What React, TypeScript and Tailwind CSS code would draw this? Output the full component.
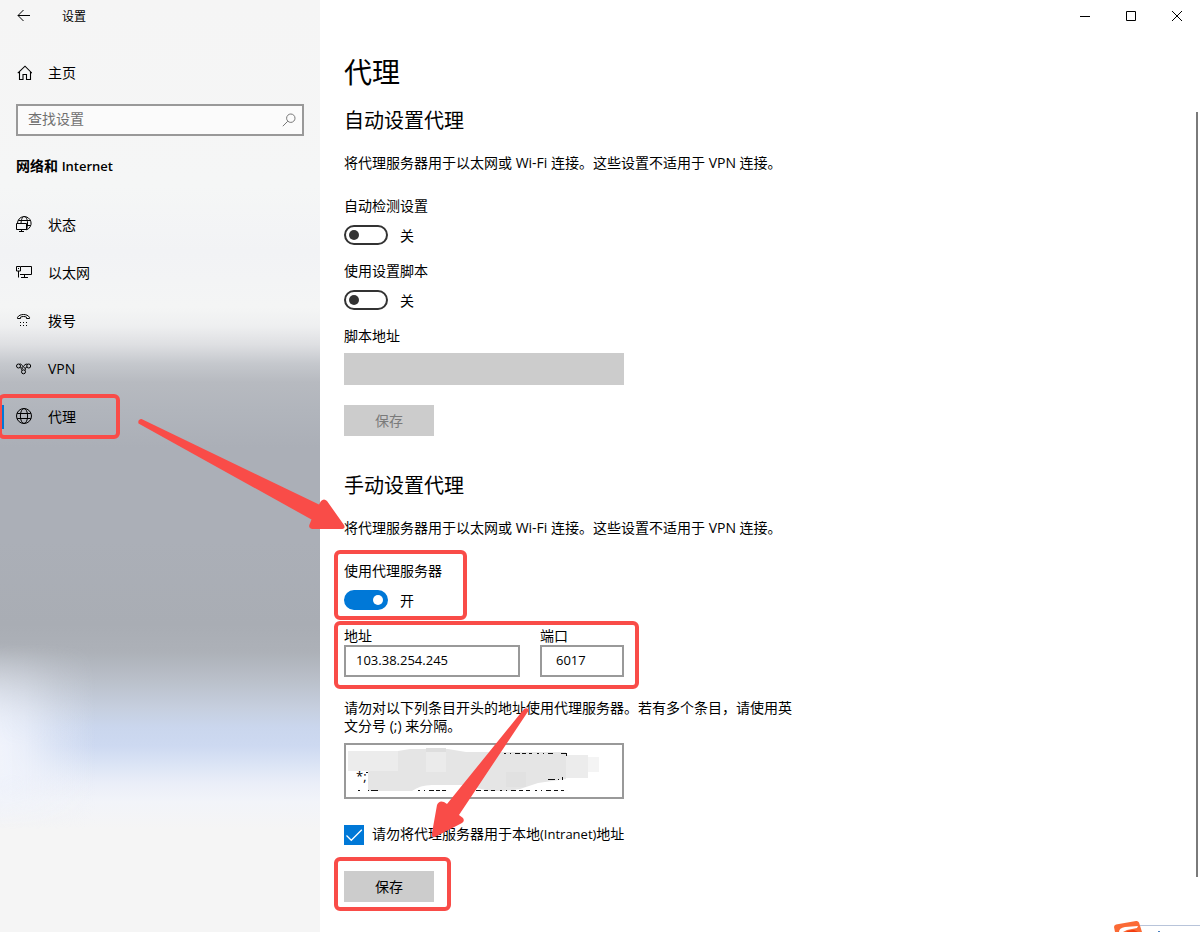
import { useState } from "react";
import type { ReactNode } from "react";

function Latin({ children }: { children: ReactNode }) {
  return <span className="text-[13px]">{children}</span>;
}

function StatusIcon() {
  return (
    <svg width="16" height="18" viewBox="0 0 16 18" fill="none" stroke="#000" strokeWidth="1" aria-hidden="true">
      <path d="M1.500 7.500a6.800 6.800 0 1 1 9 6.300M5 7.500C5.300 3 6.500.5 8.200.5s3.300 2.600 3.300 6.500c0 3-.4 5-1 6.500M2.500 4.500h12M10.500 9.500H14.500" />
      <path d="M.5 7.500h10v6H.5zM5.500 13.500v2M3 15.500h5" />
    </svg>
  );
}

function EthernetIcon() {
  return (
    <svg width="16" height="18" viewBox="0 0 16 18" fill="none" stroke="#000" strokeWidth="1" aria-hidden="true">
      <path d="M5 2.500h10.500v8H4M8.500 10.500v3M5 13.500h7" />
      <path d="M.5 2.500h4v4.500h-4zM2.500 7v6.500M2 4.500h1" />
    </svg>
  );
}

function DialIcon() {
  return (
    <svg width="16" height="18" viewBox="0 0 16 18" fill="none" stroke="#000" strokeWidth="1" aria-hidden="true">
      <path d="M1.500 6.500V5.400C2.600 3.400 5 2.500 7.500 2.500s4.900.9 6 2.900v1.100h-3V5.200C9.600 4.700 8.600 4.500 7.500 4.500s-2.100.2-3 .7v1.300z" />
      <path d="M4 10.500h1M7 10.500h1M10 10.500h1M4 13.500h1M7 13.500h1M10 13.500h1" />
    </svg>
  );
}

function VpnIcon() {
  return (
    <svg width="16" height="18" viewBox="0 0 16 18" fill="none" stroke="#000" strokeWidth="1" aria-hidden="true">
      <circle cx="2.500" cy="6" r="2" />
      <circle cx="12.700" cy="6" r="2" />
      <circle cx="7.500" cy="11.800" r="2" />
      <path d="M3.500 4.200C5 3.500 6 5 7 6.500s2.500 2 3.200 1L11.200 7M4 7.500c1.200 1.200 2 .2 3.200-1S9.500 3.500 11.700 4.300M6 10.500C5 9.300 5.600 8.300 7 8M9 10.500c.8-1 .6-2 0-2.500" />
    </svg>
  );
}

function GlobeIcon() {
  return (
    <svg width="16" height="18" viewBox="0 0 16 18" fill="none" stroke="#000" strokeWidth="1" aria-hidden="true">
      <circle cx="8" cy="8" r="7.500" />
      <ellipse cx="8" cy="8" rx="3.600" ry="7.500" />
      <path d="M1.200 5.500h13.600M1.200 10.500h13.600" />
    </svg>
  );
}

const navItems = [
  { label: "状态", icon: <StatusIcon /> },
  { label: "以太网", icon: <EthernetIcon /> },
  { label: "拨号", icon: <DialIcon /> },
  { label: "VPN", icon: <VpnIcon /> },
  { label: "代理", icon: <GlobeIcon />, current: true },
];

function Callout({ className }: { className: string }) {
  return <span aria-hidden="true" className={`pointer-events-none absolute rounded-md border-4 border-[#f94c48] ${className}`} />;
}

function Toggle({ label, initial = false }: { label: string; initial?: boolean }) {
  const [on, setOn] = useState(initial);
  return (
    <div>
      <div className="leading-5">{label}</div>
      <div className="mt-[9px] flex h-5 items-center gap-3">
        <button
          type="button"
          role="switch"
          aria-checked={on}
          aria-label={label}
          onClick={() => setOn(!on)}
          className={`flex h-5 w-11 items-center rounded-full border-2 px-[3px] ${on ? "justify-end border-[#0078d7] bg-[#0078d7]" : "border-[#333] bg-white"}`}
        >
          <span className={`size-[10px] rounded-full ${on ? "bg-white" : "bg-[#333]"}`} />
        </button>
        <span className="pt-px">{on ? "开" : "关"}</span>
      </div>
    </div>
  );
}

function Sidebar() {
  return (
    <aside className="relative w-80 shrink-0 bg-[linear-gradient(180deg,#f5f5f5_0%,#f5f6f6_20%,#f2f3f5_27%,#f4f5f5_33%,#eeeff0_35%,#dedfe2_37%,#c5c8cd_39%,#b7bac0_41%,#b1b5bc_44%,#abafb7_48%,#abafb7_58%,#a9adb4_67%,#adb1b8_70%,#bac0ca_73%,#c6cfdf_76%,#cad6ed_78%,#cdd9f1_80%,#dbe4f5_82%,#eaeef8_84%,#f2f4f9_86%,#f5f5f5_89%,#f5f5f5_100%)]">
      <div aria-hidden="true" className="absolute inset-y-0 left-0 w-24 bg-[linear-gradient(90deg,#f0f3fb_0%,#f0f3fbd0_25%,#f0f3fb60_60%,#f0f3fb00_100%)] [mask-image:linear-gradient(180deg,transparent_69%,#0006_73%,#000c_77%,#000_80%,#000_83%,transparent_89%)]" />
      <div className="relative">
        <div className="flex h-8 items-center">
          <button type="button" aria-label="返回" className="flex h-8 w-12 items-center justify-center">
            <svg width="14" height="14" viewBox="0 0 14 14" fill="none" stroke="#000" strokeWidth="1" aria-hidden="true">
              <path d="M1 6.500h12M6.500 1 1 6.500 6.500 12" />
            </svg>
          </button>
          <span className="pt-0.5 pl-[14px] text-xs">设置</span>
        </div>
        <a href="#home" className="mt-[17px] flex h-12 items-center gap-4 px-4">
          <svg width="16" height="16" viewBox="0 0 16 16" fill="none" stroke="#000" strokeWidth="1.100" aria-hidden="true">
            <path d="M1.800 8.200 9 1.200l7 7M3.500 7v7.500h3.500V9.500h3.500v5h4V7" />
          </svg>
          主页
        </a>
        <div className="mx-4 mt-[7px] flex h-8 items-center border-2 border-[#999] bg-white/60 pr-1.5 pl-2.5">
          <input aria-label="查找设置" placeholder="查找设置" className="min-w-0 flex-1 bg-transparent pb-0.5 outline-none placeholder:text-[#707070]" />
          <svg width="14" height="14" viewBox="0 0 14 14" fill="none" stroke="#777" strokeWidth="1" aria-hidden="true">
            <circle cx="8.800" cy="5.200" r="4.200" />
            <path d="M5.800 8.200.8 13.200" />
          </svg>
        </div>
        <h2 className="mt-5 px-4 leading-5 font-semibold">
          网络和 <Latin>Internet</Latin>
        </h2>
        <nav className="mt-[25px]">
          {navItems.map((item) => (
            <a
              key={item.label}
              href={`#${item.label}`}
              aria-current={item.current ? "page" : undefined}
              className="relative flex h-12 items-center gap-4 px-4"
            >
              {item.current && <span className="absolute top-3 left-0 h-6 w-1 bg-[#0078d7]" />}
              {item.icon}
              {item.label}
              {item.current && <Callout className="top-px -left-0.5 h-[45px] w-[122px]" />}
            </a>
          ))}
        </nav>
      </div>
    </aside>
  );
}

function WindowButtons() {
  return (
    <div className="flex h-8 justify-end">
      <button type="button" aria-label="最小化" className="flex w-[46px] items-center justify-center">
        <svg width="10" height="10" viewBox="0 0 10 10" stroke="#000" aria-hidden="true"><path d="M0 5.500h10" /></svg>
      </button>
      <button type="button" aria-label="最大化" className="flex w-[46px] items-center justify-center">
        <svg width="10" height="10" viewBox="0 0 10 10" fill="none" stroke="#000" aria-hidden="true"><path d="M.5.5h9v9h-9z" /></svg>
      </button>
      <button type="button" aria-label="关闭" className="flex w-[46px] items-center justify-center">
        <svg width="10" height="10" viewBox="0 0 10 10" stroke="#000" aria-hidden="true"><path d="m0 0 10 10M10 0 0 10" /></svg>
      </button>
    </div>
  );
}

function Description() {
  return (
    <p className="mt-[18px] leading-5">将代理服务器用于以太网或 Wi-Fi 连接。这些设置不适用于 VPN 连接。</p>
  );
}

function ExceptionList() {
  return (
    <div className="relative mt-2 h-14 w-[280px] max-w-full">
      <textarea
        aria-label="例外地址"
        defaultValue={"\n*;"}
        className="block size-full resize-none overflow-hidden border-2 border-[#999] bg-white px-2.5 py-1 text-[13px] leading-[18px] outline-none"
      />
      <svg className="pointer-events-none absolute top-0 left-0" width="280" height="56" viewBox="0 0 280 56" aria-hidden="true">
        <path fill="#e5e5e5" d="M24 8h30l12-2h38l18 3h100v27l-28 4-18 6-14 2H146l-26-6H88q-12 0-20 6H24z" />
        <path fill="#ececec" d="M4 8h50v20H4zM222 12h22v23h-22z" />
        <path fill="#f4f4f4" d="M244 14h11v15h-11z" />
        <path fill="#dedede" d="M82 5h20v4H82z" />
        <path fill="#e1e1e1" d="M162 29h20v15h-20z" />
        <path fill="#ebebeb" d="M82 9h20v20H82z" />
        <path
          stroke="#111"
          strokeDasharray="2 4 1 4 5 2 4 3 3 5"
          d="M160 10.500h50"
        />
        <path stroke="#111" d="M217 10.500h6M222.500 10v3M204 36.500h7M214 36.500h1M218.500 34v3M22 29.500h2" />
        <path
          stroke="#111"
          strokeDasharray="2 8 1 2 7 40 2 4 1 4 5 2 4 2 4 4"
          d="M14 47.500h92"
        />
        <path stroke="#111" strokeDasharray="5 3 4 3 4 5 2 4 1 4" d="M132 47.500h88" />
      </svg>
    </div>
  );
}

function Arrows() {
  return (
    <svg className="pointer-events-none absolute top-0 left-0" width="660" height="860" viewBox="0 0 660 860" fill="#f94c48" aria-hidden="true">
      <path d="M141.500 419 319 504.500 321 501q3-3 6 0L344 525q2 4-3 4H312q-4-1-2.500-4.500L311.500 519.500 138.500 423.500q-1-4 3-4.500Z" />
      <path d="M529 710 459 815l4 3q2 3-1 5L435 837q-4 1-3-4L437 805q2-5 7-3l3 2L524 709q3-2 5 1Z" />
    </svg>
  );
}

export default function App() {
  const [bypass, setBypass] = useState(true);
  return (
    <div className="relative flex min-h-screen overflow-hidden bg-white font-['Open_Sans','Noto_Sans_CJK_SC',sans-serif] text-sm text-black">
      <Sidebar />
      <main className="min-w-0 flex-1">
        <WindowButtons />
        <div className="px-6 pb-[30px]">
          <h1 className="mt-5 text-[28px] leading-10">代理</h1>

          <section className="mt-[15px]">
            <h2 className="text-xl leading-7">自动设置代理</h2>
            <Description />
            <div className="mt-[23px] flex flex-col gap-4">
              <Toggle label="自动检测设置" />
              <Toggle label="使用设置脚本" />
              <div>
                <label htmlFor="script-url" className="block leading-5">脚本地址</label>
                <input id="script-url" disabled className="mt-[7px] block h-8 w-[280px] max-w-full bg-[#ccc] px-3" />
              </div>
            </div>
            <button type="button" disabled className="mt-5 block h-[31px] w-[90px] bg-[#ccc] text-[#7a7a7a]">保存</button>
          </section>

          <section className="mt-9">
            <h2 className="text-xl leading-7">手动设置代理</h2>
            <Description />
            <div className="relative mt-[23px]">
              <Toggle label="使用代理服务器" initial />
              <Callout className="-top-[11px] -left-[10px] h-[70px] w-[133px]" />
            </div>
            <div className="relative mt-4 flex gap-5">
              <div>
                <label htmlFor="address" className="block leading-[19px]">地址</label>
                <input id="address" defaultValue="103.38.254.245" className="block h-8 w-44 border-2 border-[#999] bg-white px-2.5 pb-0.5 text-[13px] outline-none" />
              </div>
              <div>
                <label htmlFor="port" className="block leading-[19px]">端口</label>
                <input id="port" defaultValue="6017" className="block h-8 w-[84px] border-2 border-[#999] bg-white px-3.5 pb-0.5 text-[13px] outline-none" />
              </div>
              <Callout className="-top-[5px] -left-[10px] h-[68px] w-[305px]" />
            </div>
            <p className="mt-[22px] max-w-[456px] leading-[18px]">
              请勿对以下列条目开头的地址使用代理服务器。若有多个条目，请使用英文分号 (;) 来分隔。
            </p>
            <ExceptionList />
            <label className="mt-[26px] flex h-5 w-fit items-center gap-2">
              <span className="relative size-5">
                <input
                  type="checkbox"
                  checked={bypass}
                  onChange={(e) => setBypass(e.target.checked)}
                  className="block size-5 appearance-none border-2 border-[#0078d7] checked:bg-[#0078d7]"
                />
                <svg className="pointer-events-none absolute inset-0" width="20" height="20" viewBox="0 0 20 20" fill="none" stroke="#fff" strokeWidth="1.300" aria-hidden="true">
                  <path d="m2.500 10.500 4.800 4.800L17.800 4.800" />
                </svg>
              </span>
              <span className="pb-0.5">请勿将代理服务器用于本地<Latin>(Intranet)</Latin>地址</span>
            </label>
            <div className="relative mt-[26px]">
              <button type="button" className="block h-[31px] w-[90px] bg-[#ccc]">保存</button>
              <Callout className="-top-[14px] -left-[10px] h-[54px] w-[117px]" />
            </div>
          </section>
        </div>
      </main>
      <div aria-hidden="true" className="absolute top-28 right-0.5 h-[765px] w-0.5 bg-[#7a7a7a]" />
      <Arrows />
      <svg className="pointer-events-none absolute right-0 bottom-0" width="88" height="12" viewBox="0 0 88 12" aria-hidden="true">
        <path d="M28 5.500h60" stroke="#b8c4da" fill="none" />
        <path d="M46 11h2v1h-2z" fill="#4a80c0" />
        <path d="M2 7q0-2 2-2.500L24 1q2-.500 3 1.500L30 12H3z" fill="#fb6a35" />
        <path d="M7 12q0-4 6-5l13-1-1 2-10 2-4 2z" fill="#fff" />
        <path d="M14 12q2-2 8-2l4 2z" fill="#f23c10" />
      </svg>
    </div>
  );
}
